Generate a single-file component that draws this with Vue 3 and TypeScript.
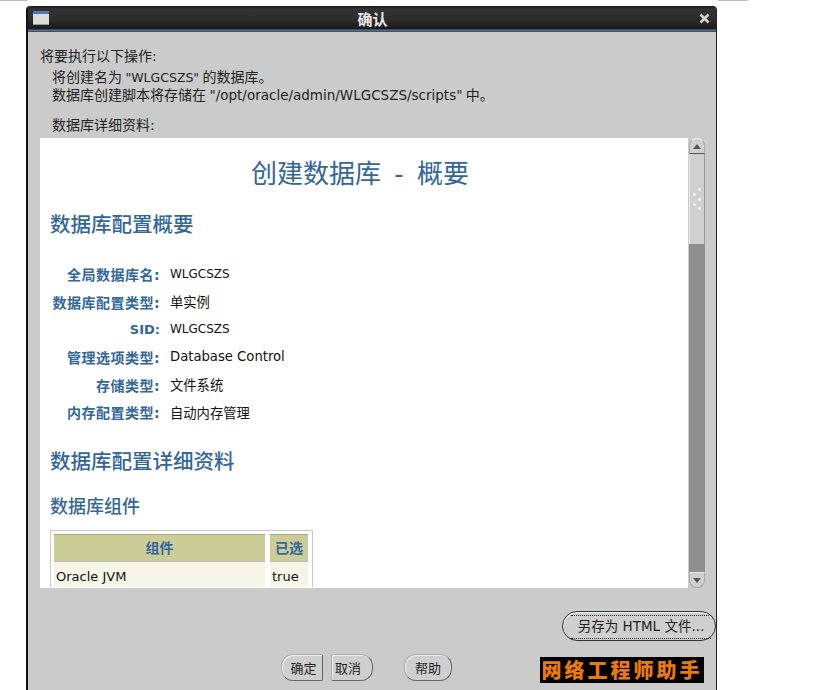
<script setup lang="ts">
const rows = [
  { label: '全局数据库名:', value: 'WLGCSZS', cls: 'v-caps' },
  { label: '数据库配置类型:', value: '单实例', cls: 'v-zh' },
  { label: 'SID:', value: 'WLGCSZS', cls: 'v-caps', short: true },
  { label: '管理选项类型:', value: 'Database Control', cls: '' },
  { label: '存储类型:', value: '文件系统', cls: 'v-zh' },
  { label: '内存配置类型:', value: '自动内存管理', cls: 'v-zh' },
]
const dots = [
  [7, 0], [2, 5], [7, 10], [2, 15], [7, 19],
]
</script>

<template>
  <div class="page">
    <div class="strip">
      <div class="cut cut-left"></div>
      <div class="cut cut-right"></div>
    </div>
    <div class="window">
      <div class="titlebar">
        <svg class="win-icon" width="16" height="14" viewBox="0 0 16 14">
          <rect width="16" height="14" fill="#dcdcdc" />
          <rect width="16" height="3" fill="#4a78b5" />
          <rect x="0" y="13" width="16" height="1" fill="#8f9bab" />
        </svg>
        <span class="title">确认</span>
        <svg class="close" width="11" height="11" viewBox="0 0 11 11">
          <path d="M1.5 1.5 L9.5 9.5 M9.5 1.5 L1.5 9.5" stroke="#d6d6d6" stroke-width="2.6" />
        </svg>
      </div>
      <div class="body">
        <p class="line first">将要执行以下操作:</p>
        <p class="line indent l2">将创建名为 <span class="en">"WLGCSZS"</span> 的数据库。</p>
        <p class="line indent l3">数据库创建脚本将存储在 <span class="en wide">"/opt/oracle/admin/WLGCSZS/scripts"</span> 中。</p>
        <p class="line indent l4">数据库详细资料:</p>

        <div class="viewer">
          <div class="content">
            <h1>创建数据库 - 概要</h1>
            <h2 class="h-summary">数据库配置概要</h2>
            <div class="summary">
              <template v-for="r in rows" :key="r.label">
                <div class="k" :class="{ 'k-short': r.short }">{{ r.label }}</div>
                <div class="v" :class="r.cls">{{ r.value }}</div>
              </template>
            </div>
            <h2 class="h-detail">数据库配置详细资料</h2>
            <h3>数据库组件</h3>
            <div class="tbl">
              <div class="th th-a">组件</div>
              <div class="th th-b">已选</div>
              <div class="td">Oracle JVM</div>
              <div class="td">true</div>
            </div>
          </div>
          <div class="scrollbar">
            <div class="arrow arrow-up">
              <svg width="8" height="5" viewBox="0 0 8 5"><path d="M4 0 L8 5 H0 Z" fill="#555" /></svg>
            </div>
            <div class="thumb">
              <div class="grip">
                <i v-for="(d, i) in dots" :key="i" :style="{ left: d[0] + 'px', top: d[1] + 'px' }"></i>
              </div>
            </div>
            <div class="track"></div>
            <div class="arrow arrow-down">
              <svg width="8" height="5" viewBox="0 0 8 5"><path d="M0 0 H8 L4 5 Z" fill="#555" /></svg>
            </div>
          </div>
        </div>

        <div class="save-row">
          <button class="btn save"><span>另存为 HTML 文件...</span></button>
        </div>
        <div class="actions">
          <button class="btn ok">确定</button>
          <button class="btn cancel">取消</button>
          <button class="btn help">帮助</button>
          <div class="logo">网络工程师助手</div>
        </div>
      </div>
    </div>
  </div>
</template>

<style scoped>
.page {
  width: 832px;
  height: 690px;
  overflow: hidden;
  background: #fff;
  font-family: "DejaVu Sans", "Noto Sans CJK SC", sans-serif;
  font-size: 14px;
  color: #111;
}
.strip {
  height: 6px;
  display: flex;
}
.cut {
  height: 1px;
  background: #bdbdbd;
}
.cut-left { width: 27px; }
.cut-right { width: 30px; margin-left: 691px; }
.window {
  width: 691px;
  height: 684px;
  margin-left: 26px;
  box-sizing: border-box;
  border-left: 2px solid #111;
  border-right: 1px solid #222;
  background: #cbcbcb;
  border-top-left-radius: 4px;
  border-top-right-radius: 4px;
  overflow: hidden;
}
.titlebar {
  height: 26px;
  background: linear-gradient(#1c1c1c 0, #333 3px, #2c2c2c 14px, #1a1a1a 23px, #5b7ea8 24px, #3a4654 26px);
  display: flex;
  align-items: center;
  justify-content: space-between;
  padding: 0 5px 2px 5px;
  box-sizing: border-box;
}
.win-icon { display: block; }
.title {
  color: #e8e8e8;
  font-weight: 700;
  font-size: 15px;
  margin-left: -3px;
}
.close { margin-right: 1px; }
.body {
  padding-top: 15px;
}
.line {
  margin: 0;
  height: 18px;
  line-height: 18px;
  white-space: nowrap;
  word-spacing: -1px;
  color: #222;
}
.en { font-size: 12.5px; }
.wide { font-size: 13.5px; }
.first { margin-left: 12px; }
.indent { margin-left: 24px; }
.l2 { margin-top: 3px; }
.l3 { margin-top: 0; }
.l4 { margin-top: 12px; }
.viewer {
  display: flex;
  margin: 4px 11px 0 12px;
  height: 450px;
}
.content {
  flex: 1;
  background: #fff;
  overflow: hidden;
  padding-left: 10px;
  color: #111;
}
.content h1 {
  margin: 21px 0 0;
  height: 30px;
  line-height: 30px;
  font-size: 26px;
  font-weight: 400;
  word-spacing: 5px;
  color: #336699;
  text-align: center;
  padding-right: 18px;
  white-space: nowrap;
}
.content h2 {
  margin: 0;
  font-size: 20.5px;
  line-height: 26px;
  font-weight: 500;
  color: #336699;
}
.h-summary { padding-top: 23px; }
.summary {
  display: grid;
  grid-template-columns: 110px 1fr;
  grid-auto-rows: 27.7px;
  column-gap: 10px;
  margin-top: 22px;
  align-items: center;
}
.k {
  text-align: right;
  font-size: 14px;
  letter-spacing: 0.5px;
  font-weight: 700;
  color: #336699;
  white-space: nowrap;
}
.k-short {
  font-size: 13px;
  letter-spacing: 0;
}
.v { font-size: 13.2px; }
.v-zh { font-size: 13.3px; }
.v-caps { font-size: 12px; }
.h-detail { margin-top: 23px !important; }
.content h3 {
  margin: 20px 0 0;
  font-size: 18px;
  line-height: 24px;
  font-weight: 500;
  color: #336699;
}
.tbl {
  margin-top: 11px;
  width: 263px;
  box-sizing: border-box;
  border: 1px solid #c9c9c9;
  border-bottom: none;
  padding: 3px 5px 0 3px;
  display: grid;
  grid-template-columns: 211px 38px;
  grid-auto-rows: min-content;
  column-gap: 5px;
  row-gap: 0;
}
.th {
  height: 27px;
  line-height: 27px;
  background: #cccc99;
  border-top: 1px solid #a8a878;
  box-sizing: border-box;
  color: #336699;
  font-weight: 700;
  text-align: center;
}
.td {
  background: #f6f6e8;
  font-size: 13px;
  height: 25px;
  line-height: 29px;
  padding-left: 2px;
  border-top: 1px solid #bcbcbc;
}
.scrollbar {
  width: 16px;
  margin-left: 1px;
  display: flex;
  flex-direction: column;
}
.arrow {
  height: 16px;
  background: #cfcfcf;
  border: 1px solid #a9a9a9;
  box-sizing: border-box;
  display: flex;
  align-items: center;
  justify-content: center;
}
.arrow-up { border-radius: 8px 8px 0 0; border-top-color: #f4f4f4; border-bottom: 1px solid #555; }
.arrow-down { border-radius: 0 0 8px 8px; border-top: 1px solid #e8e8e8; }
.thumb {
  height: 90px;
  background: #d0d0d0;
  border-left: 1px solid #eee;
  border-right: 1px solid #999;
  box-sizing: border-box;
  display: flex;
  align-items: center;
  justify-content: center;
}
.grip {
  position: relative;
  width: 12px;
  height: 22px;
}
.grip i {
  position: absolute;
  width: 3px;
  height: 3px;
  border-radius: 50%;
  background: #f2f2f2;
}
.track {
  flex: 1;
  background: #8f8f8f;
}
.save-row {
  display: flex;
  justify-content: flex-end;
  margin-top: 23px;
}
.btn {
  font: inherit;
  font-size: 13px;
  color: #222;
  background: #cfcfcf;
  border: 1px solid #aaa;
  border-right-color: #666;
  border-bottom-color: #666;
  padding: 0;
  box-shadow: inset 1px 1px 0 #f0f0f0;
  box-sizing: border-box;
}
.save {
  width: 154px;
  height: 30px;
  border-radius: 15px;
  border: 1px solid #333;
  font-size: 13.5px;
  padding: 3px 4px 3px 8px;
}
.save span {
  display: block;
  height: 22px;
  line-height: 20px;
  border-top: 1px dotted #222;
  border-bottom: 1px dotted #222;
  white-space: nowrap;
}
.actions {
  display: flex;
  align-items: flex-start;
  margin-top: 13px;
  margin-left: 253px;
}
.ok, .cancel {
  width: 42px;
  height: 27px;
}
.ok { border-radius: 12px 2px 2px 12px; padding-left: 3px; }
.cancel { margin-left: 8px; border-radius: 2px 12px 12px 2px; padding-right: 8px; }
.help {
  width: 48px;
  height: 27px;
  margin-left: 31px;
  border-radius: 12px;
}
.logo {
  width: 164px;
  height: 26px;
  margin-left: 88px;
  margin-top: 3px;
  background: #000;
  color: #ea7a0c;
  font-family: "Noto Sans CJK SC", sans-serif;
  font-weight: 900;
  font-size: 20px;
  letter-spacing: 3px;
  line-height: 26px;
  text-align: center;
  white-space: nowrap;
}
</style>
